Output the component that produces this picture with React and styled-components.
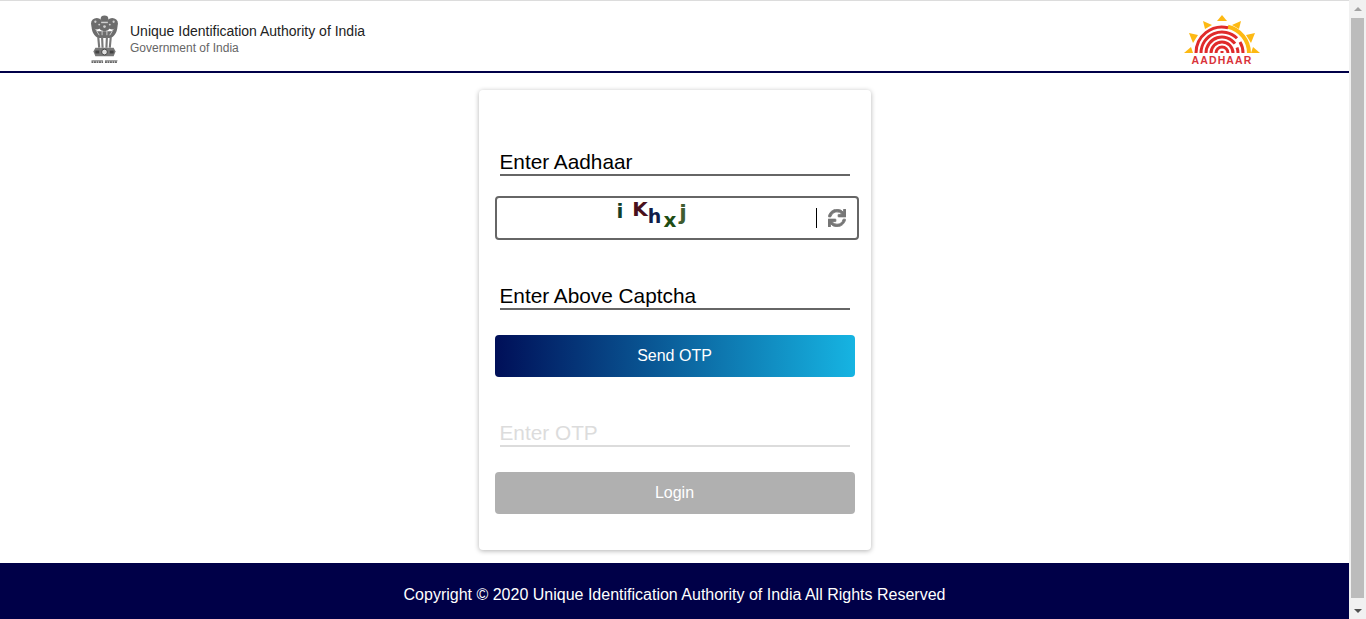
import styled, { createGlobalStyle } from "styled-components";
import { FaSync } from "react-icons/fa";

const GlobalStyle = createGlobalStyle`
  html, body {
    margin: 0;
    height: 100%;
    overflow: hidden;
    background: #fff;
  }
  * {
    box-sizing: border-box;
  }
`;

const Shell = styled.div`
  display: flex;
  height: 619px;
  font-family: "Liberation Sans", Arial, sans-serif;
`;

const Page = styled.div`
  flex: 1;
  min-width: 0;
  display: flex;
  flex-direction: column;
`;

const ScrollTrack = styled.div`
  width: 17px;
  background: #f1f1f1;
  display: flex;
  flex-direction: column;
  align-items: center;
  justify-content: space-between;
  padding: 7px 0 6px;
`;

const ScrollArrow = styled.span`
  width: 0;
  height: 0;
  border-left: 4px solid transparent;
  border-right: 4px solid transparent;
  ${({ $down }) =>
    $down ? "border-top: 4px solid #505050;" : "border-bottom: 4px solid #a3a3a3;"}
`;

const ScrollThumb = styled.div`
  flex: 1;
  width: 13px;
  margin: 7px 0 11px;
  background: #bcbcbc;
`;

const HeaderBar = styled.header`
  height: 73px;
  flex: none;
  display: flex;
  align-items: center;
  justify-content: space-between;
  padding: 6px 89px 0 90px;
  border-top: 1px solid #dcdcdc;
  border-bottom: 2px solid #000048;
`;

const Brand = styled.div`
  display: flex;
  align-items: center;
  gap: 11px;
`;

const EmblemMark = styled.svg`
  margin-top: 2px;
`;

const LogoMark = styled.svg`
  margin-top: 4px;
`;

const BrandText = styled.div`
  display: flex;
  flex-direction: column;
  gap: 1px;
  margin-top: 1px;
`;

const BrandTitle = styled.span`
  font-size: 14px;
  line-height: 17px;
  color: #222;
`;

const BrandSub = styled.span`
  font-size: 12px;
  line-height: 15px;
  color: #666;
`;

const Main = styled.main`
  flex: 1;
  display: flex;
  justify-content: center;
  align-items: flex-start;
  padding-top: 17px;
`;

const Card = styled.form`
  width: 392px;
  height: 460px;
  padding: 0 16px;
  border-radius: 4px;
  background: #fff;
  box-shadow: 0 1px 5px rgb(0 0 0 / 30%);
  display: flex;
  flex-direction: column;
  align-items: flex-start;
`;

const LineInput = styled.input`
  display: block;
  width: 350px;
  height: 29px;
  margin: ${({ $top }) => $top}px 0 0 5px;
  padding: 2px 0 0;
  border: 0;
  border-bottom: 2px solid ${({ disabled }) => (disabled ? "#dcdcdc" : "#666")};
  border-radius: 0;
  outline: none;
  background: transparent;
  font-family: inherit;
  font-size: 20.8px;

  &::placeholder {
    color: ${({ disabled }) => (disabled ? "#dcdcdc" : "#000")};
    opacity: 1;
  }
`;

const CaptchaBox = styled.div`
  width: 364px;
  height: 44px;
  margin-top: 20px;
  border: 2px solid #666;
  border-radius: 4px;
  display: flex;
  align-items: center;
`;

const CaptchaImage = styled.div`
  width: 319px;
  height: 100%;
  padding-left: 120px;
  display: flex;
  font-family: "DejaVu Sans", sans-serif;
  font-weight: 700;
`;

const CaptchaLetter = styled.span`
  font-size: ${({ $size }) => $size}px;
  line-height: 1;
  color: ${({ $color }) => $color};
  margin: ${({ $top }) => $top}px ${({ $gap }) => $gap}px 0 0;
`;

const RefreshButton = styled.button`
  flex: 1;
  height: 20px;
  padding: 0 0 0 11px;
  border: 0;
  border-left: 1px solid #000;
  background: none;
  display: flex;
  align-items: center;
  color: #767676;
  font-size: 18px;

  svg {
    stroke: currentColor;
    stroke-width: 24;
  }
`;

const ActionButton = styled.button`
  width: 360px;
  height: 42px;
  margin-top: ${({ $top }) => $top}px;
  border: 0;
  border-radius: 4px;
  background: ${({ disabled }) =>
    disabled ? "#b0b0b0" : "linear-gradient(90deg, #000f58 0%, #16b4e2 100%)"};
  color: #fff;
  font-family: inherit;
  font-size: 16px;
`;

const Footer = styled.footer`
  height: 56px;
  flex: none;
  display: flex;
  align-items: center;
  justify-content: center;
  padding-top: 8px;
  background: #000048;
  color: #fff;
  font-size: 16px;
`;

function Emblem() {
  return (
    <EmblemMark width="29" height="50" viewBox="0 0 29 52" aria-label="Emblem">
      <g fill="#6d6d6d">
        <ellipse cx="14.5" cy="4" rx="4" ry="3.5" />
        <ellipse cx="6.5" cy="9" rx="6" ry="6" />
        <ellipse cx="22.5" cy="9" rx="6" ry="6" />
        <ellipse cx="14.5" cy="11" rx="6" ry="6" />
        <path d="M1 11c0 7 3 11 7 13h13c4-2 7-6 7-13l-6 6-15 0z" />
      </g>
      <g fill="#cfcfcf">
        <circle cx="5" cy="7" r="1.2" />
        <circle cx="9" cy="10" r="1" />
        <circle cx="24" cy="7" r="1.2" />
        <circle cx="20" cy="10" r="1" />
        <rect x="11" y="7" width="7" height="1.5" />
        <circle cx="14.5" cy="12" r="1.4" />
        <path d="M6 16l3 5M23 16l-3 5M12 16l0 5M17 16l0 5" stroke="#cfcfcf" />
      </g>
      <path
        d="M8 23l1 11M12 23l.5 11M17 23l-.5 11M21 23l-1 11"
        stroke="#777"
        strokeWidth="2.2"
      />
      <path d="M5 34h19l2 4-2 5H5l-2-5z" fill="#777" />
      <circle cx="14.5" cy="38.5" r="3" fill="#e0e0e0" stroke="#444" />
      <rect x="5" y="37" width="4" height="3" fill="#444" />
      <rect x="20" y="37" width="4" height="3" fill="#444" />
      <path d="M1 49h12M15 49h13" stroke="#666" strokeWidth="2" strokeDasharray="2 .6" />
      <path d="M1 47.6h12M15 47.6h13" stroke="#444" strokeWidth=".7" />
    </EmblemMark>
  );
}

function AadhaarLogo() {
  const rays = [
    "M38 0l-5 6h10z",
    "M19 6l9 4-7 4z",
    "M57 6l-9 4 7 4z",
    "M5 18l9 2-5 8z",
    "M71 18l-9 2 5 8z",
    "M0 38l7-6 2 6z",
    "M76 38l-7-6-2 6z",
  ];
  return (
    <LogoMark width="76" height="52" viewBox="0 0 76 52" aria-label="Aadhaar">
      {rays.map((d) => (
        <path key={d} d={d} fill="#fdb913" />
      ))}
      <g fill="none" stroke="#e02b2b" strokeWidth="3">
        <path d="M44 11.7A27 27 0 0 1 65 38" stroke="#fdb913" strokeWidth="4" />
        <path d="M12 38A26 26 0 0 1 44 12.7" />
        <path d="M17 38A21 21 0 0 1 53 23.3" />
        <path d="M56 27A21 21 0 0 1 59 38" />
        <path d="M22 38A16 16 0 0 1 51 28.7" />
        <path d="M53 32.5A16 16 0 0 1 54 38" />
        <path d="M27 38A11 11 0 0 1 49 38" />
        <path d="M32 38A6 6 0 0 1 44 38" />
        <path d="M38 36V38" />
      </g>
      <text
        x="38"
        y="49"
        textAnchor="middle"
        fontFamily="Liberation Sans, sans-serif"
        fontWeight="700"
        fontSize="10.5"
        letterSpacing="1.1"
        fill="#d9333a"
      >
        AADHAAR
      </text>
    </LogoMark>
  );
}

const captcha = [
  { ch: "i", color: "#123f2a", size: 20, top: 3, gap: 9 },
  { ch: "K", color: "#48101c", size: 20, top: 1, gap: 0 },
  { ch: "h", color: "#101c4a", size: 19, top: 9, gap: 2 },
  { ch: "x", color: "#1e4d14", size: 20, top: 12, gap: 3 },
  { ch: "j", color: "#3f5c30", size: 22, top: 4, gap: 0 },
];

export default function App() {
  return (
    <Shell>
      <GlobalStyle />
      <Page>
        <HeaderBar>
          <Brand>
            <Emblem />
            <BrandText>
              <BrandTitle>Unique Identification Authority of India</BrandTitle>
              <BrandSub>Government of India</BrandSub>
            </BrandText>
          </Brand>
          <AadhaarLogo />
        </HeaderBar>
        <Main>
          <Card>
            <LineInput $top={57} placeholder="Enter Aadhaar" />
            <CaptchaBox>
              <CaptchaImage>
                {captcha.map((l) => (
                  <CaptchaLetter
                    key={l.ch}
                    $color={l.color}
                    $size={l.size}
                    $top={l.top}
                    $gap={l.gap}
                  >
                    {l.ch}
                  </CaptchaLetter>
                ))}
              </CaptchaImage>
              <RefreshButton type="button" aria-label="Refresh captcha">
                <FaSync />
              </RefreshButton>
            </CaptchaBox>
            <LineInput $top={41} placeholder="Enter Above Captcha" />
            <ActionButton type="button" $top={25}>
              Send OTP
            </ActionButton>
            <LineInput $top={41} placeholder="Enter OTP" disabled />
            <ActionButton type="button" $top={25} disabled>
              Login
            </ActionButton>
          </Card>
        </Main>
        <Footer>Copyright © 2020 Unique Identification Authority of India All Rights Reserved</Footer>
      </Page>
      <ScrollTrack>
        <ScrollArrow />
        <ScrollThumb />
        <ScrollArrow $down />
      </ScrollTrack>
    </Shell>
  );
}
